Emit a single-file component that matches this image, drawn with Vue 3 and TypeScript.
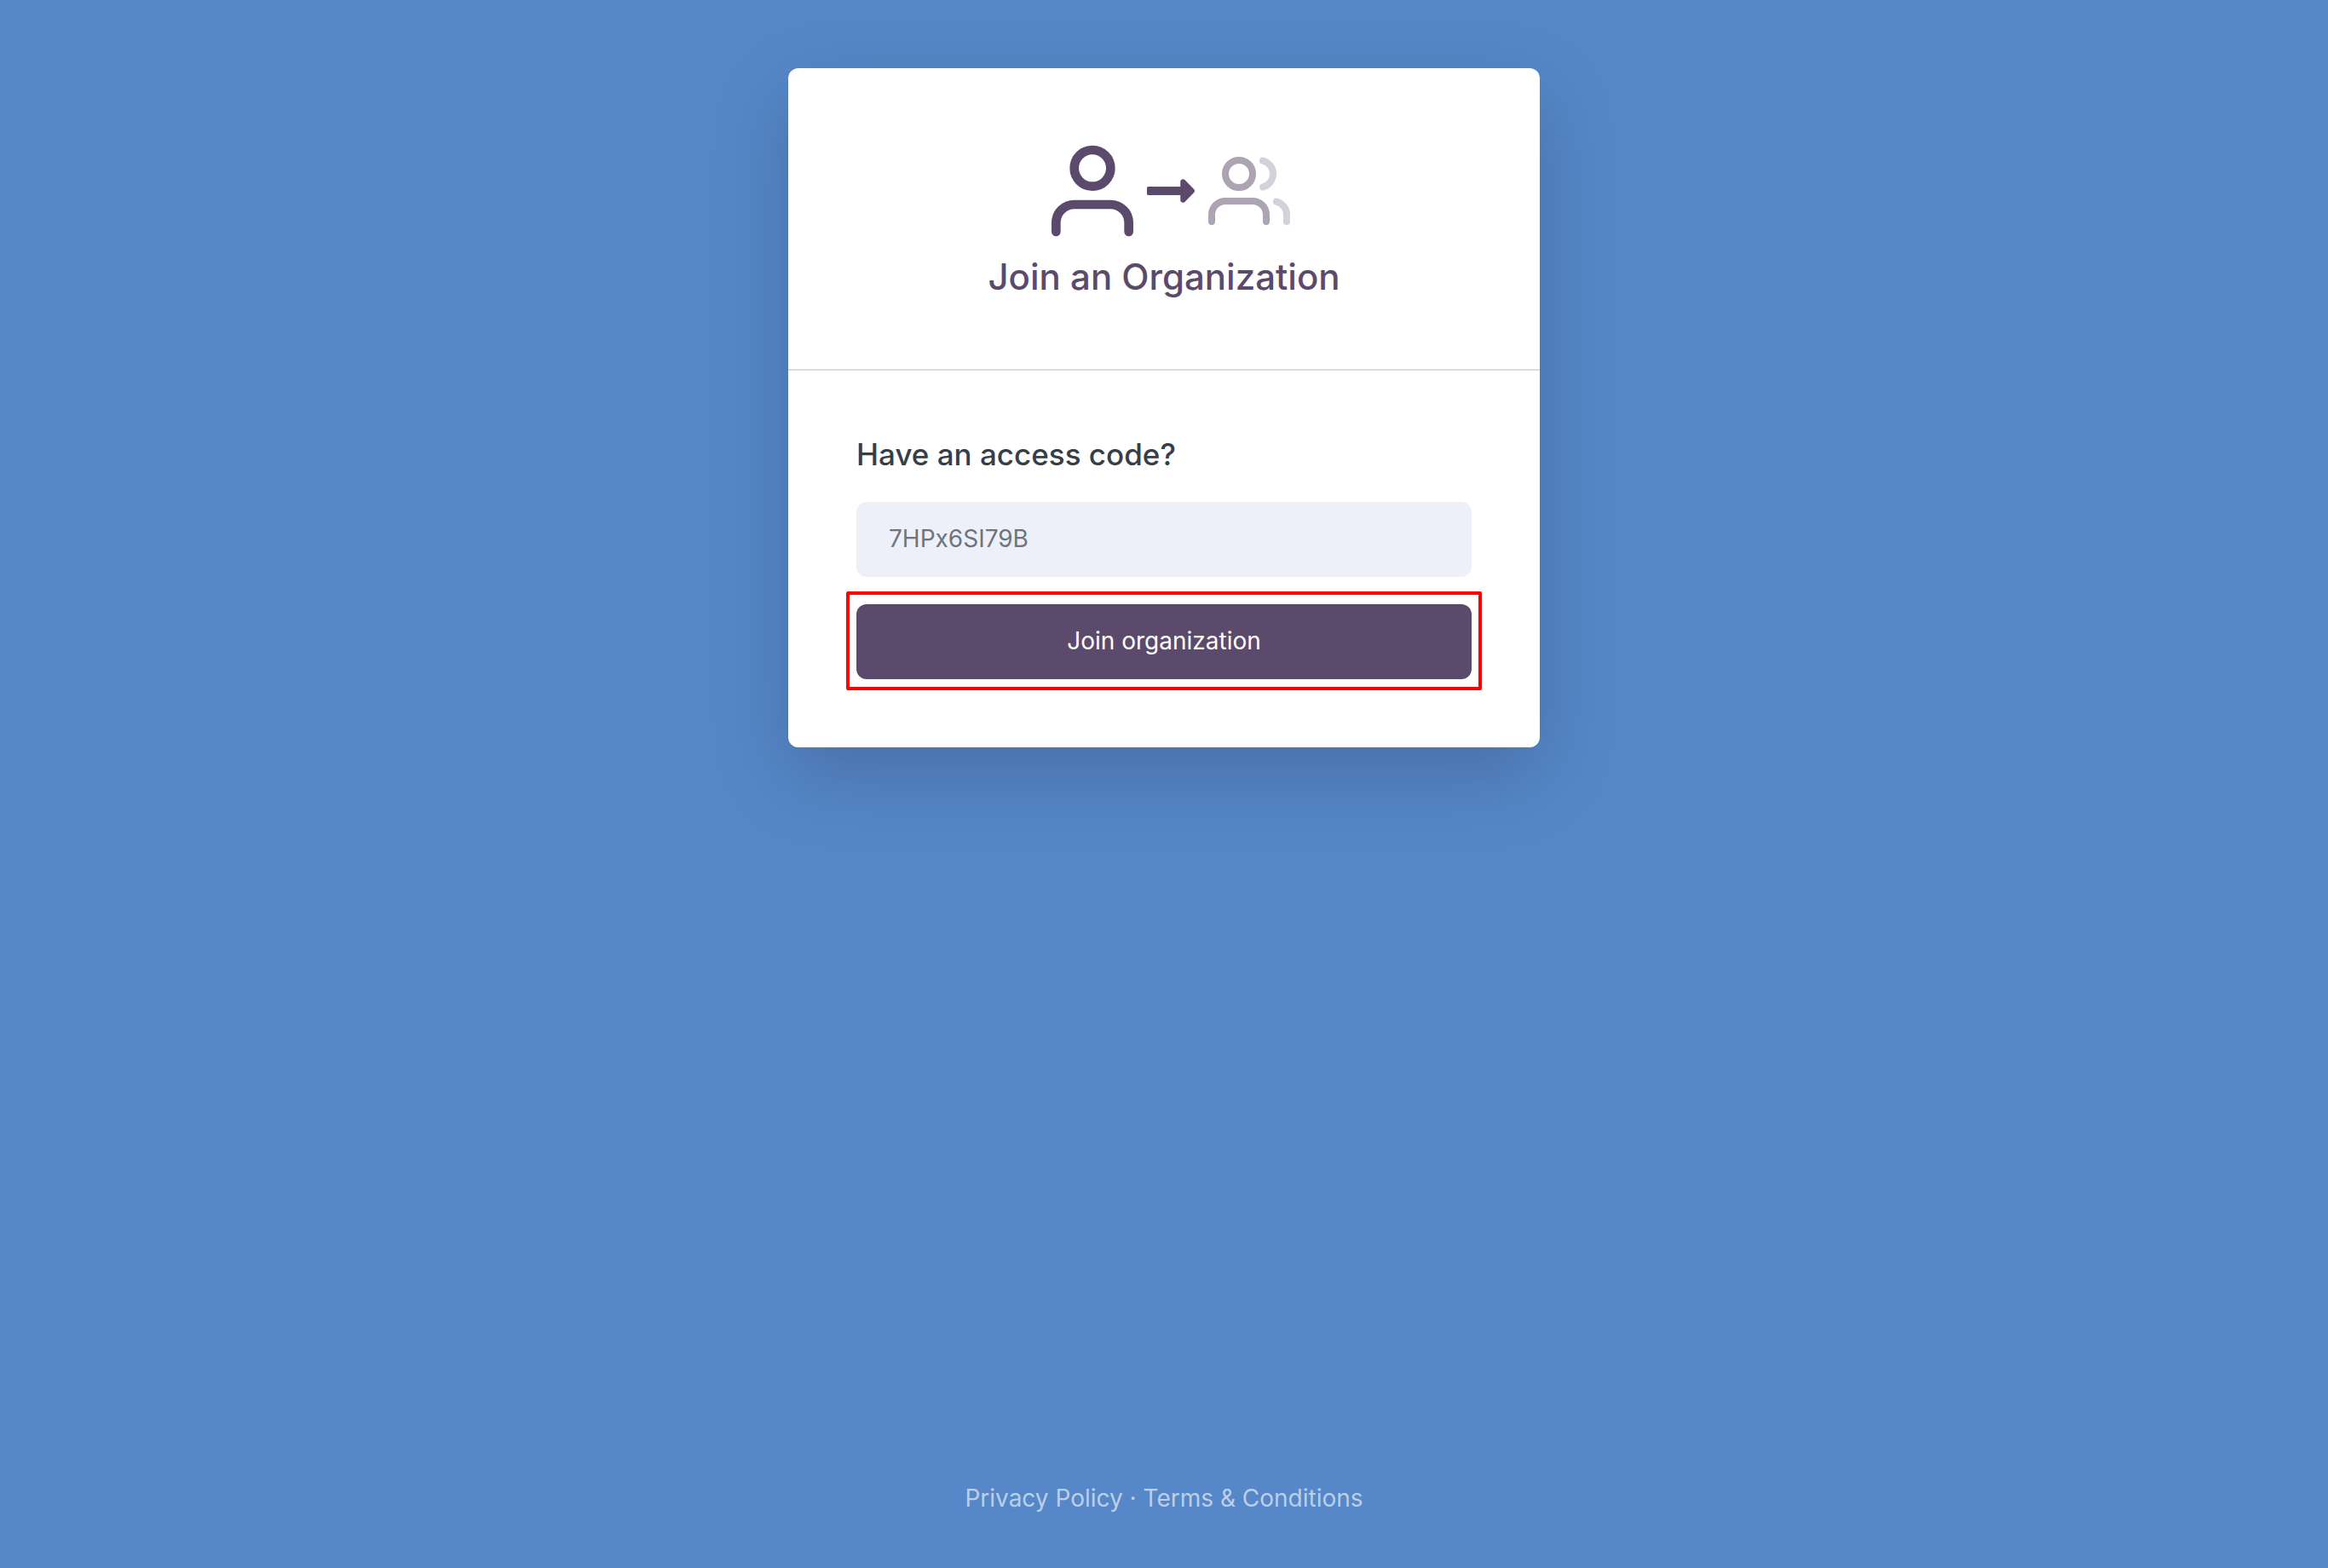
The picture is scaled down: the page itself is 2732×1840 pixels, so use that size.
<script setup lang="ts">
import { ref } from 'vue'

const accessCode = ref('')
const joining = ref(false)

function join(): void {
  joining.value = accessCode.value.trim().length > 0
}
</script>

<template>
  <div class="page">
    <main class="card">
      <header class="card-header">
        <div class="icons" aria-hidden="true">
          <svg class="icon-user" viewBox="0 0 24 24">
            <path d="M20 21v-2a4 4 0 0 0-4-4H8a4 4 0 0 0-4 4v2" />
            <circle cx="12" cy="7" r="4" />
          </svg>
          <svg class="icon-arrow" viewBox="0 0 448 512">
            <path d="M313.941 216H12c-6.627 0-12 5.373-12 12v56c0 6.627 5.373 12 12 12h301.941v46.059c0 21.382 25.851 32.09 40.971 16.971l86.059-86.059c9.373-9.373 9.373-24.569 0-33.941l-86.059-86.059c-15.119-15.119-40.971-4.411-40.971 16.971V216z" />
          </svg>
          <svg class="icon-users" viewBox="0 0 24 24">
            <path d="M17 21v-2a4 4 0 0 0-4-4H5a4 4 0 0 0-4 4v2" />
            <circle cx="9" cy="7" r="4" />
            <path class="faint" d="M23 21v-2a4 4 0 0 0-3-3.87" />
            <path class="faint" d="M16 3.13a4 4 0 0 1 0 7.75" />
          </svg>
        </div>
        <h1>Join an Organization</h1>
      </header>
      <form class="card-body" @submit.prevent="join">
        <label for="access-code">Have an access code?</label>
        <input id="access-code" v-model="accessCode" type="text" placeholder="7HPx6SI79B" autocomplete="off" />
        <div class="action">
          <button type="submit" :disabled="joining">Join organization</button>
        </div>
      </form>
    </main>
    <footer class="footer">
      <a href="#privacy">Privacy Policy</a> · <a href="#terms">Terms &amp; Conditions</a>
    </footer>
  </div>
</template>

<style>
body {
  margin: 0;
  background: #5687c8;
}
</style>

<style scoped>
.page {
  box-sizing: border-box;
  min-height: 100vh;
  padding: 80px 24px 62px;
  display: flex;
  flex-direction: column;
  align-items: center;
  justify-content: space-between;
  font-family: Inter, "Open Sans", sans-serif;
  font-size: 28px;
  line-height: 40px;
}
.card {
  box-sizing: border-box;
  width: 100%;
  max-width: 882px;
  border-radius: 12px;
  background: #fff;
  box-shadow: 0 32px 96px rgba(0, 0, 0, 0.175);
}
.card-header {
  padding: 80px 80px 84px;
  border-bottom: 2px solid #dbdbdb;
  color: #5c4a6d;
  text-align: center;
}
.icons {
  display: flex;
  align-items: center;
  justify-content: center;
}
.icon-user,
.icon-users {
  fill: none;
  stroke: currentColor;
  stroke-width: 2;
  stroke-linecap: round;
  stroke-linejoin: round;
}
.icon-user {
  width: 128px;
  height: 128px;
}
.icon-arrow {
  width: 56px;
  height: 64px;
  margin-right: 16px;
  fill: currentColor;
}
.icon-users {
  width: 96px;
  height: 96px;
  opacity: 0.5;
}
.faint {
  opacity: 0.5;
}
h1 {
  margin: 13px 0 0;
  font-size: 42px;
  font-weight: 500;
  line-height: 48px;
}
.card-body {
  padding: 75px 80px 80px;
  display: flex;
  flex-direction: column;
}
label {
  margin-bottom: 33px;
  color: #363e48;
  font-size: 35px;
  font-weight: 500;
  line-height: 46px;
}
input {
  box-sizing: border-box;
  width: 100%;
  height: 88px;
  margin-bottom: 32px;
  padding: 0 36px 2px;
  border: 2px solid #edf1f7;
  border-radius: 12px;
  background: #edf0f9;
  color: #363e48;
  font: inherit;
}
input::placeholder {
  color: #6c757d;
  opacity: 1;
}
.action {
  position: relative;
}
.action::after {
  content: "";
  position: absolute;
  inset: -15px -12px -13px;
  border: 4px solid #f00;
  border-radius: 2px;
  pointer-events: none;
}
button {
  display: block;
  width: 100%;
  height: 88px;
  padding: 0 0 2px;
  border: 0;
  border-radius: 12px;
  background: #5c4a6d;
  color: #fff;
  font: inherit;
  cursor: pointer;
}
.footer {
  color: #bbcfe9;
}
.footer a {
  color: inherit;
  text-decoration: none;
}
</style>
